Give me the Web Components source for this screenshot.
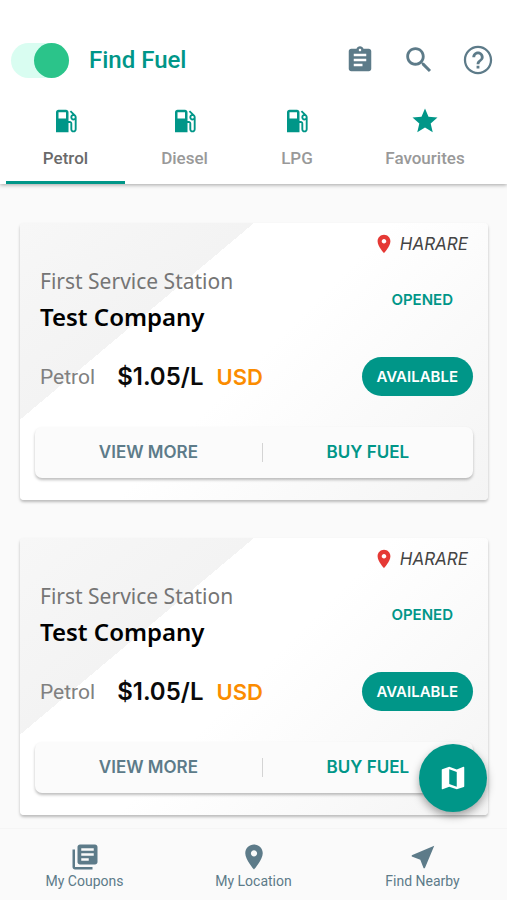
<!DOCTYPE html>
<html lang="en">
<head>
<meta charset="utf-8">
<meta name="viewport" content="width=device-width, initial-scale=1">
<title>Find Fuel</title>
<style>
  html, body { margin: 0; height: 100%; }
  body {
    --teal: #009688;
    --slate: #5d7b89;
    --amber: #fb8c00;
    background: #fafafa;
    font-family: Roboto, "Liberation Sans", sans-serif;
  }
</style>
</head>
<body>
<fuel-app>
  <app-header slot="header" heading="Find Fuel">
    <fuel-tab icon="pump" selected>Petrol</fuel-tab>
    <fuel-tab icon="pump">Diesel</fuel-tab>
    <fuel-tab icon="pump">LPG</fuel-tab>
    <fuel-tab icon="star">Favourites</fuel-tab>
  </app-header>
  <station-card>
    <span slot="city">HARARE</span>
    <span slot="station">First Service Station</span>
    <span slot="company">Test Company</span>
    <span slot="state">OPENED</span>
    <span slot="fuel">Petrol</span>
    <span slot="price">$1.05/L</span>
    <span slot="currency">USD</span>
    <span slot="stock">AVAILABLE</span>
  </station-card>
  <station-card>
    <span slot="city">HARARE</span>
    <span slot="station">First Service Station</span>
    <span slot="company">Test Company</span>
    <span slot="state">OPENED</span>
    <span slot="fuel">Petrol</span>
    <span slot="price">$1.05/L</span>
    <span slot="currency">USD</span>
    <span slot="stock">AVAILABLE</span>
  </station-card>
  <map-button slot="action"></map-button>
  <bottom-nav slot="nav">
    <nav-item icon="library">My Coupons</nav-item>
    <nav-item icon="pin">My Location</nav-item>
    <nav-item icon="arrow">Find Nearby</nav-item>
  </bottom-nav>
</fuel-app>

<script>
const ICONS = {
  pump: 'M19.77 7.23l.01-.01-3.72-3.72L15 4.56l2.11 2.11c-.94.36-1.61 1.26-1.61 2.33 0 1.38 1.12 2.5 2.5 2.5.36 0 .69-.08 1-.21v7.21c0 .55-.45 1-1 1s-1-.45-1-1V14c0-1.1-.9-2-2-2h-1V5c0-1.1-.9-2-2-2H6c-1.1 0-2 .9-2 2v16h10v-7.5h1.5v5c0 1.38 1.12 2.5 2.5 2.5s2.5-1.12 2.5-2.5V9c0-.69-.28-1.32-.73-1.77zM12 10H6V5h6v5zm6 0c-.55 0-1-.45-1-1s.45-1 1-1 1 .45 1 1-.45 1-1 1z',
  star: 'M12 17.27L18.18 21l-1.64-7.03L22 9.24l-7.19-.61L12 2 9.19 8.63 2 9.24l5.46 4.73L5.82 21z',
  clipboard: 'M19 3h-4.18C14.4 1.84 13.3 1 12 1c-1.3 0-2.4.84-2.82 2H5c-1.1 0-2 .9-2 2v14c0 1.1.9 2 2 2h14c1.1 0 2-.9 2-2V5c0-1.1-.9-2-2-2zm-7 0c.55 0 1 .45 1 1s-.45 1-1 1-1-.45-1-1 .45-1 1-1zm2 14H7v-2h7v2zm3-4H7v-2h10v2zm0-4H7V7h10v2z',
  search: 'M15.5 14h-.79l-.28-.27C15.41 12.59 16 11.11 16 9.5 16 5.91 13.09 3 9.5 3S3 5.91 3 9.5 5.91 16 9.5 16c1.61 0 3.09-.59 4.23-1.57l.27.28v.79l5 4.99L20.49 19l-4.99-5zm-6 0C7.01 14 5 11.99 5 9.5S7.01 5 9.5 5 14 7.01 14 9.5 11.99 14 9.5 14z',
  help: 'M11 18h2v-2h-2v2zm1-16C6.48 2 2 6.48 2 12s4.48 10 10 10 10-4.48 10-10S17.52 2 12 2zm0 18.4c-4.640 0-8.400-3.760-8.400-8.400S7.360 3.600 12 3.600s8.400 3.760 8.400 8.400-3.760 8.400-8.400 8.400zM12 6c-2.210 0-4 1.790-4 4h2c0-1.100.9-2 2-2s2 .9 2 2c0 2-3 1.750-3 5h2c0-2.250 3-2.500 3-5 0-2.210-1.790-4-4-4z',
  pin: 'M12 2C8.13 2 5 5.13 5 9c0 5.250 7 13 7 13s7-7.750 7-13c0-3.870-3.130-7-7-7zm0 9.500c-1.380 0-2.500-1.120-2.500-2.500s1.120-2.500 2.500-2.500 2.500 1.120 2.500 2.500-1.120 2.500-2.500 2.500z',
  map: 'M20.500 3l-.16.03L15 5.100 9 3 3.360 4.900c-.21.07-.36.25-.36.48V20.500c0 .28.22.5.5.5l.16-.03L9 18.900l6 2.100 5.640-1.900c.21-.07.36-.25.36-.48V3.500c0-.28-.22-.5-.5-.5zM15 19l-6-2.110V5l6 2.110V19z',
  library: 'M4 6H2v14c0 1.100.9 2 2 2h14v-2H4V6zm16-4H8c-1.100 0-2 .9-2 2v12c0 1.100.9 2 2 2h12c1.100 0 2-.9 2-2V4c0-1.100-.9-2-2-2zm-1 9H9V9h10v2zm-4 4H9v-2h6v2zm4-8H9V5h10v2z',
  arrow: 'M21 3L3 10.530v.98l6.840 2.650L12.480 21h.98L21 3z'
};

const icon = (name, size) =>
  `<svg viewBox="0 0 24 24" width="${size}" height="${size}" fill="currentColor" aria-hidden="true"><path d="${ICONS[name]}"/></svg>`;

const BASE = `
  *, *::before, *::after { box-sizing: border-box; }
  svg { display: block; flex: none; }
  button { margin: 0; padding: 0; border: 0; background: none; color: inherit; font: inherit; cursor: pointer; }
`;

function define(name, render) {
  customElements.define(name, class extends HTMLElement {
    constructor() {
      super();
      this.attachShadow({ mode: 'open' });
    }
    connectedCallback() {
      const { css, html } = render(this);
      this.shadowRoot.innerHTML = `<style>${BASE}${css}</style>${html}`;
    }
  });
}

define('fuel-app', () => ({
  css: `
    :host { display: flex; flex-direction: column; height: 100vh; overflow: hidden; }
    .body { position: relative; flex: 1; min-height: 0; display: flex; flex-direction: column; }
    main { flex: 1; min-height: 0; overflow: auto; scrollbar-width: none; display: flex; flex-direction: column; gap: 38px; padding: 39px 19px 12px 20px; }
    .float { position: absolute; right: 20px; bottom: 16px; }
  `,
  html: `
    <slot name="header"></slot>
    <div class="body">
      <main><slot></slot></main>
      <div class="float"><slot name="action"></slot></div>
    </div>
    <slot name="nav"></slot>`
}));

define('app-header', el => ({
  css: `
    :host { display: block; position: relative; z-index: 1; padding-top: 30px; background: #fff; box-shadow: 0 1px 4px rgba(0,0,0,.35); }
    .bar { display: flex; align-items: center; height: 60px; padding: 0 12px 0 11px; }
    .switch { flex: none; appearance: none; width: 58px; height: 35px; margin: 0 20px 0 0; border-radius: 18px; background: #d9fdf1; display: flex; justify-content: flex-end; cursor: pointer; }
    .switch::before { content: ""; width: 35px; height: 35px; border-radius: 50%; background: #2bc48a; }
    .switch:not(:checked) { justify-content: flex-start; }
    h1 { flex: 1; margin: 0; font-size: 24px; line-height: 30px; font-weight: 500; color: var(--teal); }
    .tools { display: flex; align-items: center; gap: 25px; color: var(--slate); }
    .tools button { display: grid; place-items: center; width: 34px; height: 34px; }
    .tabs { display: grid; grid-template-columns: 119fr 119fr 106fr 150fr; padding: 0 7px 0 6px; }
  `,
  html: `
    <div class="bar">
      <input class="switch" type="checkbox" role="switch" aria-label="Fuel mode" checked>
      <h1>${el.getAttribute('heading')}</h1>
      <div class="tools">
        <button aria-label="Orders">${icon('clipboard', 30)}</button>
        <button aria-label="Search">${icon('search', 34)}</button>
        <button aria-label="Help">${icon('help', 34)}</button>
      </div>
    </div>
    <div class="tabs" role="tablist"><slot></slot></div>`
}));

define('fuel-tab', el => ({
  css: `
    :host { display: block; }
    button { width: 100%; display: flex; flex-direction: column; align-items: center; gap: 10px; padding: 16px 0 11px; border-bottom: 3px solid transparent; font-size: 17px; line-height: 24px; font-weight: 500; color: #999; }
    :host([selected]) button { border-color: var(--teal); color: #6a6a6a; }
    svg { color: var(--teal); }
  `,
  html: `<button role="tab" aria-selected="${el.hasAttribute('selected')}">${icon(el.getAttribute('icon'), 30)}<span><slot></slot></span></button>`
}));

define('station-card', () => ({
  css: `
    :host {
      flex: none; display: block; padding: 10px 15px 22px; border-radius: 4px;
      font-family: Inter, "Liberation Sans", sans-serif;
      background:
        linear-gradient(to bottom right, #f7f7f7, #f3f3f3 50%, transparent 50%) 0 0 / 50% 71% no-repeat,
        linear-gradient(135deg, #fff 50%, #f4f4f4);
      box-shadow: 0 2px 3px rgba(0,0,0,.26);
    }
    .place { display: flex; justify-content: flex-end; align-items: center; gap: 5px; padding-right: 5px; line-height: 22px; font-size: 17px; font-style: italic; color: #444; }
    .place svg { color: #e53935; }
    .info { display: flex; align-items: center; justify-content: space-between; margin-top: 8px; padding: 0 20px 0 5px; }
    .names { font-family: "Noto Sans", sans-serif; }
    .station { font-size: 21px; line-height: 36px; color: #757575; }
    h2 { margin: 0; font-size: 24px; line-height: 36px; font-weight: 600; color: #000; }
    .state { font-size: 15px; font-weight: 600; color: var(--teal); }
    .offer { display: flex; align-items: center; margin-top: 22px; padding-left: 5px; }
    .fuel { font-family: Roboto, sans-serif; font-size: 21px; color: #808080; margin-right: 22px; }
    .price { font-size: 24px; line-height: 28px; font-weight: 600; color: #0a0a0a; margin-right: 13px; }
    .currency { font-size: 22px; line-height: 28px; font-weight: 600; color: var(--amber); flex: 1; }
    .stock { height: 39px; padding: 0 15px; border-radius: 20px; background: var(--teal); color: #fff; font-size: 15px; font-weight: 600; }
    .actions { display: grid; grid-template-columns: 52fr 48fr; align-items: center; margin-top: 31px; padding: 16px 0; border-radius: 7px; background: #fbfbfb; box-shadow: 0 2px 3px rgba(0,0,0,.26); font-size: 17px; font-weight: 600; line-height: 19px; }
    .more { color: var(--slate); border-right: 1px solid #d4d4d4; }
    .buy { color: var(--teal); }
  `,
  html: `
    <div class="place">${icon('pin', 22)}<slot name="city"></slot></div>
    <div class="info">
      <div class="names">
        <div class="station"><slot name="station"></slot></div>
        <h2><slot name="company"></slot></h2>
      </div>
      <div class="state"><slot name="state"></slot></div>
    </div>
    <div class="offer">
      <span class="fuel"><slot name="fuel"></slot></span>
      <span class="price"><slot name="price"></slot></span>
      <span class="currency"><slot name="currency"></slot></span>
      <button class="stock"><slot name="stock"></slot></button>
    </div>
    <div class="actions">
      <button class="more">VIEW MORE</button>
      <button class="buy">BUY FUEL</button>
    </div>`
}));

define('map-button', () => ({
  css: `
    :host { display: block; }
    button { display: grid; place-items: center; width: 68px; height: 68px; border-radius: 50%; background: var(--teal); color: #fff; box-shadow: 0 4px 8px rgba(0,0,0,.35); }
  `,
  html: `<button aria-label="Open map">${icon('map', 30)}</button>`
}));

define('bottom-nav', () => ({
  css: `
    :host { display: block; background: #fafafa; border-top: 1px solid #f5f5f5; }
    nav { display: grid; grid-template-columns: repeat(3, 1fr); padding: 13px 0 9px; }
  `,
  html: `<nav aria-label="Main"><slot></slot></nav>`
}));

define('nav-item', el => ({
  css: `
    :host { display: block; }
    a { display: flex; flex-direction: column; align-items: center; color: var(--slate); text-decoration: none; font-size: 14px; line-height: 19px; }
  `,
  html: `<a href="#${el.getAttribute('icon')}">${icon(el.getAttribute('icon'), 30)}<span><slot></slot></span></a>`
}));
</script>
</body>
</html>
